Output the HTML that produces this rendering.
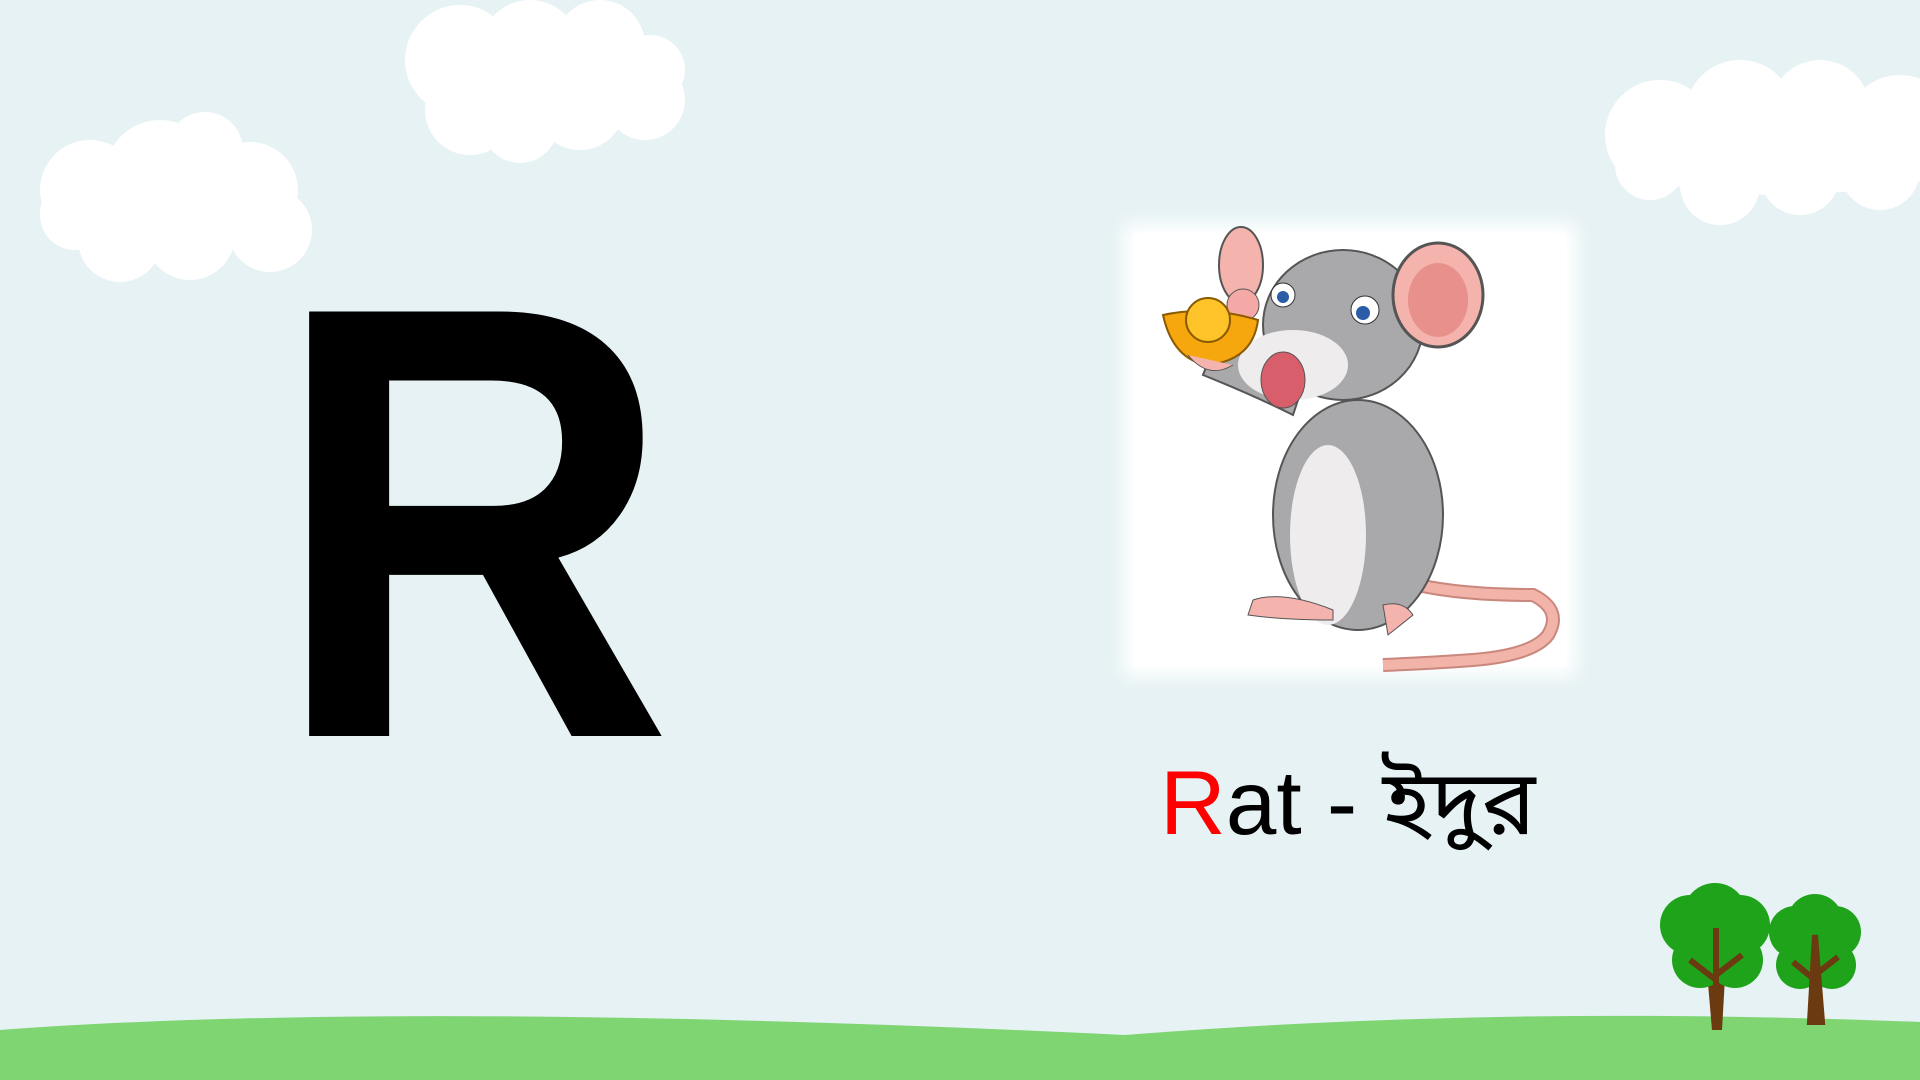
<!DOCTYPE html>
<html><head><meta charset="utf-8"><style>
html,body{margin:0;padding:0}
body{width:1920px;height:1080px;overflow:hidden;background:#e6f2f4;position:relative;font-family:"Liberation Sans",sans-serif}
.abs{position:absolute}
.big{left:272px;top:214px;font-size:617px;font-weight:bold;line-height:1;color:#000;transform:scaleX(0.9);transform-origin:left top}
.word{left:1160px;top:758px;font-size:91px;line-height:1;color:#000;white-space:nowrap}
.photo{left:1133px;top:233px;width:434px;height:434px;background:#fff;box-shadow:0 0 18px 10px #fff}
</style></head><body>
<svg class="abs" style="left:0;top:0" width="1920" height="1080">
<g fill="#fff">
 <ellipse cx="170" cy="210" rx="130" ry="45"/>
 <circle cx="90" cy="190" r="50"/><circle cx="160" cy="175" r="55"/><circle cx="205" cy="150" r="38"/><circle cx="250" cy="190" r="48"/><circle cx="270" cy="230" r="42"/><circle cx="190" cy="235" r="45"/><circle cx="120" cy="240" r="42"/><circle cx="75" cy="215" r="35"/>
 <ellipse cx="550" cy="85" rx="130" ry="45"/>
 <circle cx="460" cy="60" r="55"/><circle cx="530" cy="50" r="50"/><circle cx="600" cy="45" r="45"/><circle cx="650" cy="70" r="35"/><circle cx="645" cy="100" r="40"/><circle cx="580" cy="105" r="45"/><circle cx="520" cy="125" r="38"/><circle cx="470" cy="110" r="45"/>
 <ellipse cx="1780" cy="150" rx="170" ry="45"/>
 <circle cx="1660" cy="135" r="55"/><circle cx="1740" cy="115" r="55"/><circle cx="1820" cy="110" r="50"/><circle cx="1900" cy="130" r="55"/><circle cx="1880" cy="170" r="40"/><circle cx="1800" cy="175" r="40"/><circle cx="1720" cy="185" r="40"/><circle cx="1650" cy="165" r="35"/>
</g>
<path d="M0 1030 Q400 1000 1125 1035 Q1500 1005 1920 1022 L1920 1080 L0 1080Z" fill="#7ed571"/>
<g>
 <path d="M1706 960 L1712 1030 L1722 1030 L1726 960Z" fill="#6b3a10"/>
 <g fill="#1ea31a"><circle cx="1690" cy="925" r="30"/><circle cx="1740" cy="925" r="30"/><circle cx="1715" cy="915" r="32"/><circle cx="1700" cy="960" r="28"/><circle cx="1735" cy="960" r="28"/></g>
 <path d="M1716 928 L1716 1030 M1716 980 L1690 960 M1716 975 L1742 955" stroke="#6b3a10" stroke-width="6" fill="none"/>
 <g fill="#1ea31a"><circle cx="1795" cy="932" r="26"/><circle cx="1835" cy="932" r="26"/><circle cx="1815" cy="922" r="28"/><circle cx="1800" cy="965" r="24"/><circle cx="1832" cy="965" r="24"/></g>
 <path d="M1815 935 L1810 1022 L1822 1022Z M1815 980 L1793 962 M1815 975 L1838 957" stroke="#6b3a10" stroke-width="6" fill="#6b3a10"/>
</g>
</svg>
<div class="abs big">R</div>
<div class="abs photo"></div>
<svg class="abs" style="left:1133px;top:215px" width="440" height="460">
 <path d="M285 370 Q330 380 400 380 Q430 395 415 420 Q400 440 340 445 Q300 448 250 450" stroke="#c9877e" stroke-width="14" fill="none"/>
 <path d="M285 370 Q330 380 400 380 Q430 395 415 420 Q400 440 340 445 Q300 448 250 450" stroke="#f2b3a8" stroke-width="10" fill="none"/>
 <ellipse cx="225" cy="300" rx="85" ry="115" fill="#a9a8ab" stroke="#555" stroke-width="2"/>
 <ellipse cx="195" cy="320" rx="38" ry="90" fill="#efeced"/>
 <path d="M80 135 Q130 140 170 170 L160 200 Q120 180 70 160Z" fill="#a9a8ab" stroke="#555" stroke-width="2"/>
 <ellipse cx="210" cy="110" rx="80" ry="75" fill="#a9a8ab" stroke="#555" stroke-width="2"/>
 <ellipse cx="108" cy="50" rx="22" ry="38" fill="#f5b3ad" stroke="#555" stroke-width="2"/>
 <ellipse cx="305" cy="80" rx="45" ry="52" fill="#f5b3ad" stroke="#555" stroke-width="3"/>
 <ellipse cx="305" cy="85" rx="30" ry="37" fill="#e8908c"/>
 <ellipse cx="160" cy="150" rx="55" ry="35" fill="#efeced"/>
 <circle cx="150" cy="80" r="12" fill="#fff" stroke="#333"/><circle cx="150" cy="82" r="6" fill="#2a5ca8"/>
 <circle cx="232" cy="95" r="14" fill="#fff" stroke="#333"/><circle cx="230" cy="98" r="7" fill="#2a5ca8"/>
 <ellipse cx="150" cy="165" rx="22" ry="28" fill="#d95e6c" stroke="#555"/>
 <circle cx="110" cy="90" r="16" fill="#f5a9a6" stroke="#555"/>
 <path d="M120 385 Q150 375 200 395 L200 405 Q150 405 115 400Z" fill="#f5b3ad" stroke="#555"/>
 <path d="M250 390 Q270 385 280 400 L255 420 Z" fill="#f5b3ad" stroke="#555"/>
 <path d="M30 100 Q75 90 125 105 Q120 145 75 150 Q40 145 30 100Z" fill="#f7a70e" stroke="#8a5b00" stroke-width="2"/>
 <circle cx="75" cy="105" r="22" fill="#ffc32a" stroke="#8a5b00" stroke-width="2"/>
 <path d="M55 140 Q75 165 100 150" fill="#f5b3ad" stroke="#555"/>
</svg>
<div class="abs word"><span style="color:#f00">R</span>at - <span style="font-family:'Liberation Sans','Noto Sans Bengali','Lohit Bengali',sans-serif">ইদুর</span></div>
</body></html>
